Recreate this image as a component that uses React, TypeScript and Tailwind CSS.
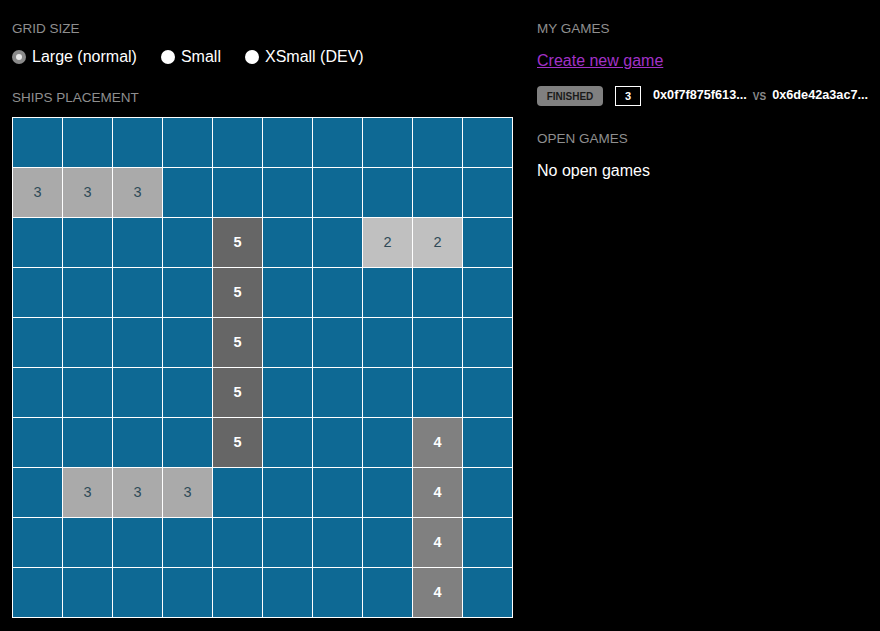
import React from "react";

type Cell = { n?: number };

const SHIPS: Record<string, number> = {
  "1-0": 3, "1-1": 3, "1-2": 3,
  "2-4": 5, "3-4": 5, "4-4": 5, "5-4": 5, "6-4": 5,
  "2-7": 2, "2-8": 2,
  "6-8": 4, "7-8": 4, "8-8": 4, "9-8": 4,
  "7-1": 3, "7-2": 3, "7-3": 3,
};

const cellStyle: Record<number, string> = {
  2: "bg-[#c0c0c0] text-[#2f4a58] font-normal",
  3: "bg-[#aaaaaa] text-[#2f4a58] font-normal",
  4: "bg-[#808080] text-white font-bold",
  5: "bg-[#666666] text-white font-bold",
};

function Radio({ label, checked }: { label: string; checked?: boolean }) {
  return (
    <label className="flex items-center gap-[6px] text-white text-[16px]">
      {checked ? (
        <span className="w-[14px] h-[14px] rounded-full bg-[#8a8a8a] flex items-center justify-center">
          <span className="w-[6px] h-[6px] rounded-full bg-[#e8e8e8]" />
        </span>
      ) : (
        <span className="w-[14px] h-[14px] rounded-full bg-white" />
      )}
      <span>{label}</span>
    </label>
  );
}

export default function App() {
  const rows: Cell[][] = Array.from({ length: 10 }, (_, r) =>
    Array.from({ length: 10 }, (_, c) => ({ n: SHIPS[`${r}-${c}`] }))
  );

  return (
    <div
      className="min-h-screen w-[880px] h-[631px] bg-black flex gap-6 px-3 pt-[21px]"
      style={{ fontFamily: '"Liberation Sans", Arial, sans-serif' }}
    >
      {/* Left: placement */}
      <div className="w-[501px] flex flex-col">
        <div className="h-4 leading-4 text-[13.5px] text-[#8f8f8f] uppercase">Grid size</div>
        <div className="mt-[10px] h-5 flex items-center gap-[24px]">
          <Radio label="Large (normal)" checked />
          <Radio label="Small" />
          <Radio label="XSmall (DEV)" />
        </div>
        <div className="mt-[23px] h-4 leading-4 text-[13.5px] text-[#8f8f8f] uppercase">Ships placement</div>
        <div className="mt-[11px] grid grid-cols-10 gap-px bg-white p-px w-[501px]">
          {rows.map((row, r) =>
            row.map((cell, c) => (
              <div
                key={`${r}-${c}`}
                className={`h-[49px] flex items-center justify-center text-[14.5px] ${
                  cell.n ? cellStyle[cell.n] : "bg-[#0e6994]"
                }`}
              >
                {cell.n ?? ""}
              </div>
            ))
          )}
        </div>
      </div>

      {/* Right: games */}
      <div className="flex-1 flex flex-col">
        <div className="h-4 leading-4 text-[13.5px] text-[#8f8f8f] uppercase">My games</div>
        <a href="#" className="mt-[14px] h-5 leading-5 text-[16px] text-[#a232c8] underline self-start">
          Create new game
        </a>
        <div className="mt-[15px] h-5 flex items-center">
          <span className="h-5 w-[66px] rounded-sm bg-[#808080] text-[#1a1a1a] text-[10px] font-bold flex items-center justify-center">
            FINISHED
          </span>
          <span className="ml-3 h-5 w-[26px] border border-white text-white text-[11px] font-bold flex items-center justify-center">
            3
          </span>
          <span className="ml-[12px] text-white text-[12.7px] font-bold">0x0f7f875f613...</span>
          <span className="ml-[6px] text-[#8a8a8a] text-[10px] font-bold">VS</span>
          <span className="ml-[6px] text-white text-[12.7px] font-bold">0x6de42a3ac7...</span>
        </div>
        <div className="mt-[25px] h-4 leading-4 text-[13.5px] text-[#8f8f8f] uppercase">Open games</div>
        <div className="mt-[14px] h-5 leading-5 text-[16px] text-white">No open games</div>
      </div>
    </div>
  );
}
